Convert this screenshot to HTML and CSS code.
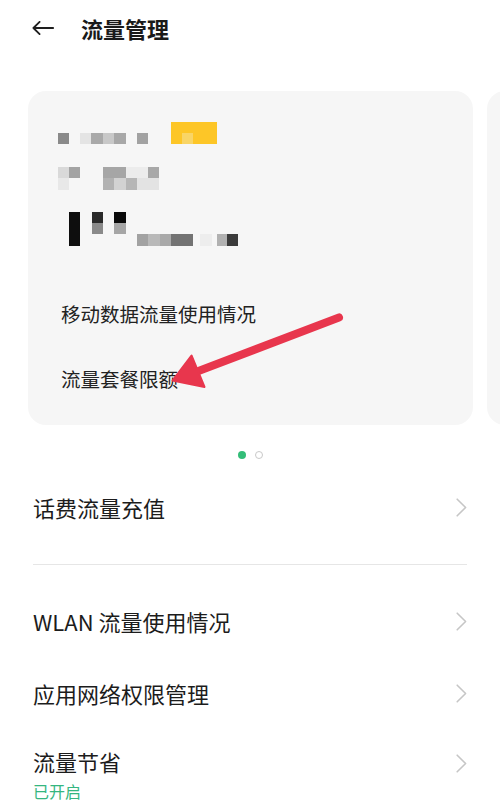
FILE: index.html
```html
<!DOCTYPE html>
<html lang="zh-CN">
<head>
<meta charset="utf-8">
<title>流量管理</title>
<link rel="stylesheet" href="styles.css">
</head>
<body>
<div class="page">
  <header class="header">
    <svg class="back" width="22" height="14" viewBox="0 0 22 14" fill="none" stroke="#1e1e1e" stroke-width="1.8" stroke-linecap="round" stroke-linejoin="round">
      <path d="M21.2 7H1.4M7.6 0.9L1.4 7l6.2 6.1"/>
    </svg>
    <h1 class="title">流量管理</h1>
  </header>

  <div class="carousel">
    <section class="card">
      <svg class="mosaic" width="182" height="128" viewBox="0 0 182 128">
        <rect x="0" y="13" width="11" height="11" fill="#8a8a8a"/>
        <rect x="22" y="13" width="11" height="11" fill="#e4e4e4"/>
        <rect x="33" y="13" width="12" height="11" fill="#a9a9a9"/>
        <rect x="45" y="13" width="11" height="11" fill="#c8c8c8"/>
        <rect x="56" y="13" width="12" height="11" fill="#a8a8a8"/>
        <rect x="79" y="13" width="11" height="11" fill="#a2a2a2"/>
        <rect x="113" y="2" width="46" height="22" fill="#fdc627"/>
        <rect x="124" y="13" width="11" height="11" fill="#f9d566"/>

        <rect x="0" y="47" width="11" height="11" fill="#d9d9d9"/>
        <rect x="11" y="47" width="11" height="11" fill="#a3a3a3"/>
        <rect x="0" y="58" width="11" height="12" fill="#e8e8e8"/>
        <rect x="45" y="47" width="23" height="11" fill="#a6a6a6"/>
        <rect x="68" y="47" width="22" height="11" fill="#ececec"/>
        <rect x="90" y="47" width="11" height="11" fill="#a8a8a8"/>
        <rect x="45" y="58" width="11" height="12" fill="#b2b2b2"/>
        <rect x="56" y="58" width="12" height="12" fill="#d2d2d2"/>
        <rect x="68" y="58" width="11" height="12" fill="#b6b6b6"/>
        <rect x="79" y="58" width="22" height="12" fill="#e3e3e3"/>

        <rect x="11" y="92" width="11" height="34" fill="#0e0e0e"/>
        <rect x="34" y="92" width="11" height="11" fill="#2a2a2a"/>
        <rect x="34" y="103" width="11" height="11" fill="#8a8a8a"/>
        <rect x="56" y="92" width="12" height="11" fill="#0a0a0a"/>
        <rect x="56" y="103" width="12" height="11" fill="#a6a6a6"/>
        <rect x="79" y="114" width="11" height="12" fill="#a2a2a2"/>
        <rect x="90" y="114" width="12" height="12" fill="#b9b9b9"/>
        <rect x="102" y="114" width="11" height="12" fill="#a9a9a9"/>
        <rect x="113" y="114" width="22" height="12" fill="#737373"/>
        <rect x="142" y="114" width="12" height="12" fill="#ededed"/>
        <rect x="159" y="114" width="10" height="12" fill="#b1b1b1"/>
        <rect x="169" y="114" width="11" height="12" fill="#3b3b3b"/>
      </svg>
      <p class="card-line first">移动数据流量使用情况</p>
      <p class="card-line">流量套餐限额</p>
      <svg class="annot" width="445" height="333" viewBox="0 0 445 333">
        <path d="M311 226.5L160 284" stroke="#e8364d" stroke-width="8" stroke-linecap="round" fill="none"/>
        <path d="M144.5 289.5L163.5 264.5L176.5 296Z" fill="#e8364d" stroke="#e8364d" stroke-width="2" stroke-linejoin="round"/>
      </svg>
    </section>
    <section class="card card-next"></section>
  </div>

  <div class="dots">
    <span class="dot active"></span>
    <span class="dot"></span>
  </div>

  <ul class="list">
    <li class="item">
      <span class="item-title">话费流量充值</span>
      <svg class="chev" width="11" height="19" viewBox="0 0 11 19" fill="none" stroke="#c6c6c6" stroke-width="1.6" stroke-linecap="round" stroke-linejoin="round"><path d="M1.2 1.2l8.4 8.3-8.4 8.3"/></svg>
    </li>
    <li class="divider"></li>
    <li class="item">
      <span class="item-title">WLAN 流量使用情况</span>
      <svg class="chev" width="11" height="19" viewBox="0 0 11 19" fill="none" stroke="#c6c6c6" stroke-width="1.6" stroke-linecap="round" stroke-linejoin="round"><path d="M1.2 1.2l8.4 8.3-8.4 8.3"/></svg>
    </li>
    <li class="item">
      <span class="item-title">应用网络权限管理</span>
      <svg class="chev" width="11" height="19" viewBox="0 0 11 19" fill="none" stroke="#c6c6c6" stroke-width="1.6" stroke-linecap="round" stroke-linejoin="round"><path d="M1.2 1.2l8.4 8.3-8.4 8.3"/></svg>
    </li>
    <li class="item item-two">
      <div class="item-text">
        <span class="item-title">流量节省</span>
        <span class="item-sub">已开启</span>
      </div>
      <svg class="chev chev-top" width="11" height="19" viewBox="0 0 11 19" fill="none" stroke="#c6c6c6" stroke-width="1.6" stroke-linecap="round" stroke-linejoin="round"><path d="M1.2 1.2l8.4 8.3-8.4 8.3"/></svg>
    </li>
  </ul>
</div>
</body>
</html>
```

FILE: styles.css
```css
* {
  box-sizing: border-box;
}

html, body {
  margin: 0;
  padding: 0;
  background: #ffffff;
}

body {
  font-family: "Noto Sans CJK SC", "Noto Sans", sans-serif;
  color: #1c1c1c;
}

.page {
  width: 500px;
  height: 809px;
  overflow: hidden;
}

.header {
  height: 56px;
  display: flex;
  align-items: center;
  padding-left: 32px;
}

.back {
  display: block;
  flex: none;
}

.title {
  margin: 0 0 0 27px;
  font-size: 22px;
  font-weight: 700;
  line-height: 30px;
  color: #1a1a1a;
}

.carousel {
  margin-top: 35px;
  display: flex;
  gap: 14px;
  padding-left: 28px;
  overflow: hidden;
}

.card {
  position: relative;
  flex: none;
  width: 445px;
  height: 334px;
  border-radius: 18px;
  background: #f6f6f6;
  padding: 29px 0 0 30px;
}

.card-next {
  width: 445px;
}

.mosaic {
  display: block;
}

.card-line {
  margin: 0;
  font-size: 19.5px;
  line-height: 28px;
  color: #222222;
  padding-left: 3px;
}

.card-line.first {
  margin-top: 52px;
  margin-bottom: 37px;
}

.annot {
  position: absolute;
  left: 0;
  top: 0;
  pointer-events: none;
}

.dots {
  margin-top: 26px;
  height: 8px;
  display: flex;
  justify-content: center;
  gap: 9px;
}

.dot {
  width: 8px;
  height: 8px;
  border-radius: 50%;
  border: 1.2px solid #c9c9c9;
  background: #ffffff;
}

.dot.active {
  border: none;
  background: #33bd78;
}

.list {
  list-style: none;
  margin: 12px 0 0 0;
  padding: 0 33px;
}

.item {
  height: 72px;
  display: flex;
  align-items: center;
  justify-content: space-between;
}

.item-title {
  font-size: 22px;
  line-height: 30px;
  color: #1c1c1c;
}

.chev {
  display: block;
  flex: none;
}

.divider {
  height: 1px;
  background: #e6e6e6;
  margin: 21px 0 20px 0;
}

.item-two {
  height: auto;
  align-items: flex-start;
  padding-top: 17px;
}

.item-text {
  display: flex;
  flex-direction: column;
}

.item-sub {
  margin-top: 4px;
  font-size: 16px;
  line-height: 22px;
  color: #35b680;
}

.chev-top {
  margin-top: 8px;
}
```
